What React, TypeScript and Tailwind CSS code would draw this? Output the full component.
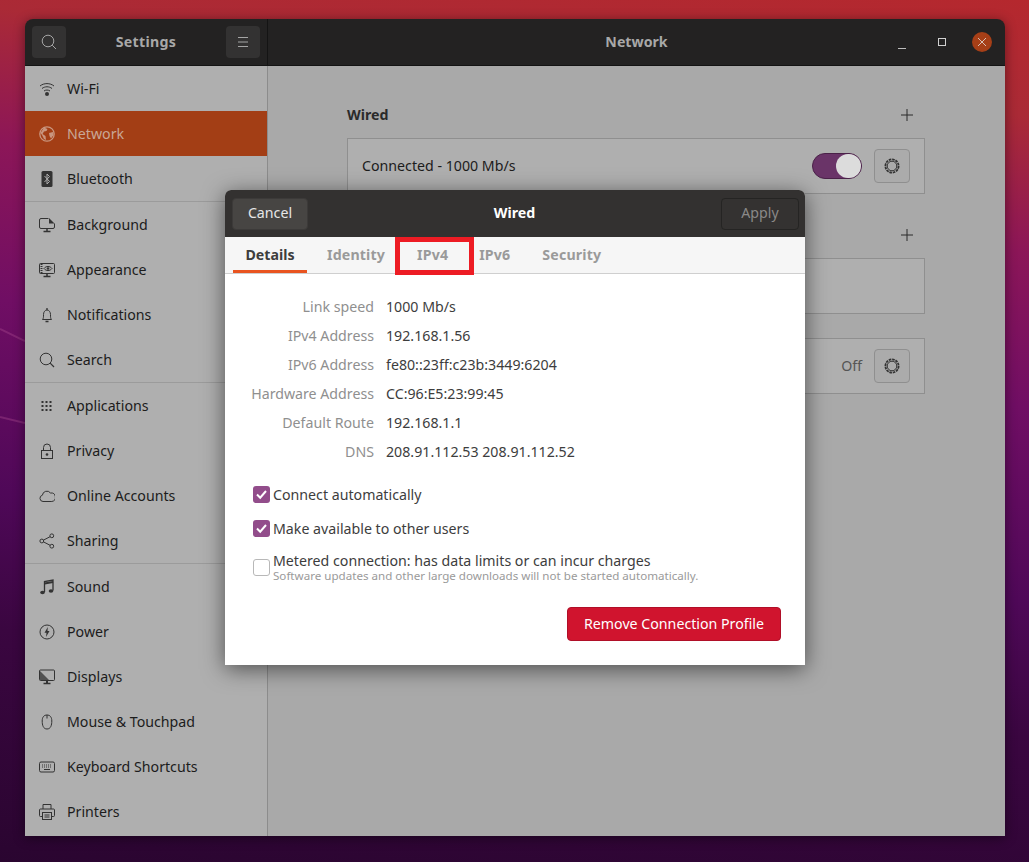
import type { ReactNode } from 'react';

const Svg = ({ children, className = 'text-[#333]' }: { children: ReactNode; className?: string }) => (
  <svg width="16" height="16" viewBox="0 0 16 16" fill="none" stroke="currentColor" strokeWidth="1" className={`shrink-0 ${className}`}>
    {children}
  </svg>
);

const icons: Record<string, ReactNode> = {
  wifi: (
    <>
      <path d="M1 5C5 1.800 11 1.800 15 5M3 7.500C6 5.200 10 5.200 13 7.500M5 10C6.800 8.700 9.200 8.700 11 10" />
      <circle cx="8" cy="13" r="2" fill="currentColor" stroke="none" />
    </>
  ),
  globe: (
    <>
      <circle cx="8" cy="8" r="7.200" strokeWidth="1.300" />
      <path d="M5 1.500 8.500 3 7.500 5 5 5.500 3.500 8 6.500 10 7 14 5 13 3 9 1.500 7ZM10 7l4-1 .5 3-2.500 3.500-1.500-2.500Z" fill="currentColor" stroke="none" />
    </>
  ),
  bluetooth: (
    <>
      <rect x="2.500" y="0" width="11" height="16" rx="1.500" fill="currentColor" stroke="none" />
      <path d="M5.500 5 10.500 10.500 8 13V3l2.500 2.500L5.500 11" stroke="#afafaf" />
    </>
  ),
  background: (
    <>
      <path d="M9.500 1.500H2A1.500 1.500 0 0 0 .5 3v7A1.500 1.500 0 0 0 2 11.500h12a1.500 1.500 0 0 0 1.500-1.500V6.500" />
      <path d="M10 1 15.500 6.500H10Z" fill="currentColor" stroke="none" />
      <path d="M8 12v2M4.500 14.500h7" strokeWidth="1.500" />
    </>
  ),
  appearance: (
    <>
      <rect x=".5" y="1.500" width="15" height="10" rx="1" />
      <path d="M2.500 2v9" strokeDasharray="1 1" strokeWidth="2" />
      <path d="M5 6.500C7 3.800 11 3.800 13 6.500 11 9.200 7 9.200 5 6.500Z" />
      <circle cx="9" cy="6.500" r="1.300" fill="currentColor" stroke="none" />
      <path d="M8 12v2M4.500 14.500h7" strokeWidth="1.500" />
    </>
  ),
  bell: (
    <>
      <path d="M3.500 12.500c1-1 1-2.500 1-5S6 3 8 3s3.500 2 3.500 4.500 0 4 1 5Z" />
      <path d="M8 1v2M6.500 14.500h3" strokeWidth="1.300" />
    </>
  ),
  search: (
    <>
      <circle cx="7" cy="7" r="5.800" />
      <path d="m11.200 11.200 3.800 3.800" strokeWidth="1.200" />
    </>
  ),
  apps: (
    <g fill="currentColor" stroke="none">
      {[3, 7, 11].flatMap((y) =>
        [2.500, 6.500, 10.500].map((x) => <rect key={`${x}-${y}`} x={x} y={y} width="2" height="2" />),
      )}
    </g>
  ),
  lock: (
    <>
      <rect x="2.500" y="7.500" width="11" height="8" />
      <path d="M4.500 7.500V4.500a3.500 3.500 0 0 1 7 0v3" />
      <circle cx="8" cy="11.500" r="1.300" fill="currentColor" stroke="none" />
    </>
  ),
  cloud: <path d="M4 13.500a3.200 3.200 0 0 1-.6-6.300A4.500 4.500 0 0 1 11.500 5a4.300 4.300 0 0 1 1.300 8.500Z" />,
  share: (
    <>
      <circle cx="2.800" cy="8" r="1.900" />
      <circle cx="12.800" cy="2.800" r="1.900" />
      <circle cx="12.800" cy="13.200" r="1.900" />
      <path d="m4.500 7.100 6.600-3.400M4.500 8.900l6.600 3.400" />
    </>
  ),
  music: (
    <>
      <path d="M5.500 13V2.500L14 1v10.500" strokeWidth="1.300" />
      <path d="M5.500 4.500 14 3" strokeWidth="2" />
      <ellipse cx="3.500" cy="13.500" rx="2.300" ry="1.800" fill="currentColor" stroke="none" />
      <ellipse cx="12" cy="12" rx="2.300" ry="1.800" fill="currentColor" stroke="none" />
    </>
  ),
  power: (
    <>
      <circle cx="8" cy="8" r="7" />
      <path d="M8.800 3 5.500 8.800h2L7 13l3.500-6h-2Z" fill="currentColor" stroke="none" />
    </>
  ),
  display: (
    <>
      <rect x=".5" y="1" width="15" height="10.500" rx="1" />
      <path d="M1 2 10 11H1Z" fill="currentColor" stroke="none" opacity=".75" />
      <path d="M8 12v2" strokeWidth="2" />
      <path d="M4.500 14.500h7" strokeWidth="1.500" />
    </>
  ),
  mouse: <path d="M8 1c-3 0-4.800 2-4.800 6s1 8 4.800 8 4.800-4 4.800-8S11 1 8 1ZM8 1v3.500" />,
  keyboard: (
    <>
      <rect x=".5" y="3" width="15" height="10" rx="1.500" />
      <path d="M3 6h10M3 8h10" strokeDasharray="1 1" />
      <path d="M5 10.500h6" />
    </>
  ),
  printer: (
    <>
      <path d="M4 5V.5h8V5M3 12.500H1.500a1 1 0 0 1-1-1V6a1 1 0 0 1 1-1h13a1 1 0 0 1 1 1v5.500a1 1 0 0 1-1 1H13" />
      <rect x="3.500" y="8.500" width="9" height="7" />
      <path d="M5.500 11h5M5.500 13h5" />
    </>
  ),
};

type NavItem = { label: string; icon: string; active?: boolean; divider?: boolean };

const navItems: NavItem[] = [
  { label: 'Wi-Fi', icon: 'wifi' },
  { label: 'Network', icon: 'globe', active: true },
  { label: 'Bluetooth', icon: 'bluetooth', divider: true },
  { label: 'Background', icon: 'background' },
  { label: 'Appearance', icon: 'appearance' },
  { label: 'Notifications', icon: 'bell' },
  { label: 'Search', icon: 'search', divider: true },
  { label: 'Applications', icon: 'apps' },
  { label: 'Privacy', icon: 'lock' },
  { label: 'Online Accounts', icon: 'cloud' },
  { label: 'Sharing', icon: 'share', divider: true },
  { label: 'Sound', icon: 'music' },
  { label: 'Power', icon: 'power' },
  { label: 'Displays', icon: 'display' },
  { label: 'Mouse & Touchpad', icon: 'mouse' },
  { label: 'Keyboard Shortcuts', icon: 'keyboard' },
  { label: 'Printers', icon: 'printer' },
];

const details = [
  ['Link speed', '1000 Mb/s'],
  ['IPv4 Address', '192.168.1.56'],
  ['IPv6 Address', 'fe80::23ff:c23b:3449:6204'],
  ['Hardware Address', 'CC:96:E5:23:99:45'],
  ['Default Route', '192.168.1.1'],
  ['DNS', '208.91.112.53 208.91.112.52'],
];

function Sidebar() {
  return (
    <aside className="w-[243px] shrink-0 border-r border-[#8c8c8c] bg-[#afafaf]">
      {navItems.map((item) => (
        <div
          key={item.label}
          className={`flex items-center gap-3 pl-[14px] ${item.divider ? 'h-[46px] border-b border-[#9b9b9b]' : 'h-[45px]'} ${
            item.active ? 'bg-[#a33e15] text-[#c9a796]' : 'text-[#1c1c1c]'
          }`}
        >
          <Svg className={item.active ? 'text-[#c9967f]' : 'text-[#333]'}>{icons[item.icon]}</Svg>
          <span>{item.label}</span>
        </div>
      ))}
    </aside>
  );
}

function GearButton() {
  return (
    <div className="flex h-[34px] w-[36px] items-center justify-center rounded-[4px] border border-[#8f8f8f] bg-[#ababab]">
      <svg width="16" height="16" viewBox="0 0 16 16" fill="none" stroke="#333">
        <circle cx="8" cy="8" r="6.600" strokeWidth="1.800" strokeDasharray="2.600 .85" />
        <circle cx="8" cy="8" r="4.800" strokeWidth="1" />
      </svg>
    </div>
  );
}

function Plus() {
  return (
    <svg width="12" height="12" viewBox="0 0 12 12" stroke="#2b2b2b" className="mr-[12px]">
      <path d="M0 6h12M6 0v12" />
    </svg>
  );
}

function NetworkPanel() {
  return (
    <main className="min-w-0 flex-1 bg-[#a9a9a9] pl-[79px] pr-[80px] pt-[38px]">
      <div className="mb-[12px] flex h-[22px] items-center justify-between">
        <span className="font-bold text-[#2b2b2b]">Wired</span>
        <Plus />
      </div>
      <div className="flex h-[56px] items-center justify-between border border-[#8f8f8f] bg-[#afafaf] pl-[14px] pr-[14px]">
        <span className="text-[#1c1c1c]">Connected - 1000 Mb/s</span>
        <div className="flex items-center gap-[12px]">
          <div className="flex h-[26px] w-[50px] items-center justify-end rounded-full border border-[#4a2148] bg-[#6a3468]">
            <div className="h-[24px] w-[25px] rounded-full bg-[#dcdcdc]" />
          </div>
          <GearButton />
        </div>
      </div>
      <div className="mb-[12px] mt-[30px] flex h-[22px] items-center justify-end">
        <Plus />
      </div>
      <div className="h-[56px] border border-[#8f8f8f] bg-[#afafaf]" />
      <div className="mt-[24px] flex h-[56px] items-center justify-end gap-[12px] border border-[#8f8f8f] bg-[#afafaf] pr-[14px]">
        <span className="text-[#555]">Off</span>
        <GearButton />
      </div>
    </main>
  );
}

function Checkbox({ checked }: { checked?: boolean }) {
  return checked ? (
    <span className="flex h-[17px] w-[17px] shrink-0 items-center justify-center rounded-[3px] bg-[#924d8b]">
      <svg width="13" height="13" viewBox="0 0 13 13" fill="none" stroke="#fff" strokeWidth="2">
        <path d="m2 6.500 3.200 3.200 5.800-6.700" />
      </svg>
    </span>
  ) : (
    <span className="h-[17px] w-[17px] shrink-0 rounded-[3px] border border-[#b8b8b8] bg-white" />
  );
}

function ConnectionDialog() {
  const tabClass = 'font-bold tracking-[0.15px] text-[#9a9a9a]';
  return (
    <div className="absolute left-[225px] top-[190px] h-[475px] w-[580px] overflow-hidden rounded-t-[6px] bg-white shadow-[0_4px_22px_rgba(0,0,0,0.55)]">
      <div className="flex h-[47px] items-center justify-between bg-[#333130] pl-[7px] pr-[6px]">
        <div className="flex h-[32px] w-[76px] items-center justify-center rounded-[4px] border border-[#3c3a39] bg-[#474543] pb-[2px] text-[#e6e6e6]">
          Cancel
        </div>
        <span className="pb-[2px] font-bold text-white">Wired</span>
        <div className="flex h-[32px] w-[78px] items-center justify-center rounded-[4px] border border-[#252423] bg-[#343231] pb-[2px] text-[#8a8988]">
          Apply
        </div>
      </div>

      <div className="relative flex h-[37px] items-stretch border-b border-[#cfcfcf] bg-[#f6f6f6] pl-[8px]">
        <div className="flex w-[74px] items-center justify-center border-b-[3px] border-[#e95420] pt-[3px] font-bold text-[#3d3d3d]">
          Details
        </div>
        <div className={`ml-[20px] pt-[7px] ${tabClass}`}>Identity</div>
        <div className={`ml-[32px] pt-[7px] ${tabClass}`}>IPv4</div>
        <div className={`ml-[31px] pt-[7px] ${tabClass}`}>IPv6</div>
        <div className={`ml-[32px] pt-[7px] ${tabClass}`}>Security</div>
        <div className="absolute left-[170px] top-0 h-[38px] w-[79px] border-[5px] border-[#ed1c24]" />
      </div>

      <div className="mt-[22px] grid grid-cols-[149px_1fr] gap-x-[12px] gap-y-[7px] text-[#3d3d3d]">
        {details.map(([label, value]) => (
          <div key={label} className="contents">
            <span className="h-[22px] whitespace-nowrap text-right leading-[22px] text-[#8f8f8f]">{label}</span>
            <span className="h-[22px] leading-[22px]">{value}</span>
          </div>
        ))}
      </div>

      <div className="ml-[28px] mt-[23px] flex flex-col text-[#3d3d3d]">
        <div className="flex h-[17px] items-center gap-[3px]">
          <Checkbox checked />
          <span>Connect automatically</span>
        </div>
        <div className="mt-[17px] flex h-[17px] items-center gap-[3px]">
          <Checkbox checked />
          <span>Make available to other users</span>
        </div>
        <div className="mt-[15px] flex items-center gap-[3px]">
          <Checkbox />
          <div className="flex flex-col">
            <span className="h-[17px] leading-[17px]">Metered connection: has data limits or can incur charges</span>
            <span className="h-[14px] text-[11.600px] leading-[14px] text-[#9a9a9a]">
              Software updates and other large downloads will not be started automatically.
            </span>
          </div>
        </div>
      </div>

      <div className="mr-[24px] mt-[24px] flex justify-end">
        <div className="flex h-[34px] w-[214px] items-center justify-center rounded-[4px] border border-[#b00f28] bg-[#d0142e] text-white">
          Remove Connection Profile
        </div>
      </div>
    </div>
  );
}

export default function App() {
  return (
    <div className="relative h-[862px] w-[1029px] overflow-hidden bg-[linear-gradient(186deg,#b5282e_0%,#aa2a36_12%,#8c1658_26%,#700e64_42%,#4f0858_62%,#3a0640_76%,#2a0530_100%)] pl-[25px] pt-[19px] text-[14.200px] [font-family:'Noto_Sans',sans-serif]">
      {/* faint wallpaper streaks left of the window */}
      <svg width="25" height="862" className="absolute left-0 top-0" fill="none" stroke="#a8488f" strokeOpacity=".4" strokeWidth="2">
        <path d="M0 329 25 341M0 417 25 423" />
      </svg>
      <div className="relative flex h-[817px] w-[980px] flex-col overflow-hidden rounded-t-[8px] shadow-[0_2px_12px_rgba(0,0,0,0.45)]">
        <header className="flex h-[47px] shrink-0 border-b border-[#141414] bg-[#232222]">
          <div className="flex w-[243px] shrink-0 items-center justify-between border-r border-[#141414] px-[7px]">
            <div className="flex h-[32px] w-[34px] items-center justify-center rounded-[4px] bg-[#333232]">
              <svg width="16" height="16" viewBox="0 0 16 16" fill="none" stroke="#a5a5a5">
                <circle cx="7" cy="7" r="5.800" />
                <path d="m11.200 11.200 3.800 3.800" />
              </svg>
            </div>
            <span className="font-bold tracking-[0.3px] text-[#a8a8a8]">Settings</span>
            <div className="flex h-[32px] w-[34px] items-center justify-center rounded-[4px] bg-[#333232]">
              <svg width="12" height="12" viewBox="0 0 12 12" stroke="#a5a5a5">
                <path d="M1 1.500h10M1 6h10M1 10.500h10" />
              </svg>
            </div>
          </div>
          <div className="relative flex flex-1 items-center justify-center">
            <span className="font-bold text-[#a8a8a8]">Network</span>
            <div className="absolute right-[13px] top-0 flex h-full items-center">
              <svg width="8" height="8" viewBox="0 0 8 8" stroke="#bdbdbd" className="mr-[32px] mt-[5px]">
                <path d="M0 7.500h8" />
              </svg>
              <svg width="8" height="8" viewBox="0 0 8 8" fill="none" stroke="#d0d0d0" className="mr-[26px]">
                <rect x=".5" y=".5" width="7" height="7" />
              </svg>
              <div className="flex h-[20px] w-[20px] items-center justify-center rounded-full bg-[#a63f17]">
                <svg width="8" height="8" viewBox="0 0 8 8" stroke="#d8c0b5">
                  <path d="m0 0 8 8M8 0 0 8" />
                </svg>
              </div>
            </div>
          </div>
        </header>
        <div className="flex min-h-0 flex-1">
          <Sidebar />
          <NetworkPanel />
        </div>
      </div>
      <ConnectionDialog />
    </div>
  );
}
